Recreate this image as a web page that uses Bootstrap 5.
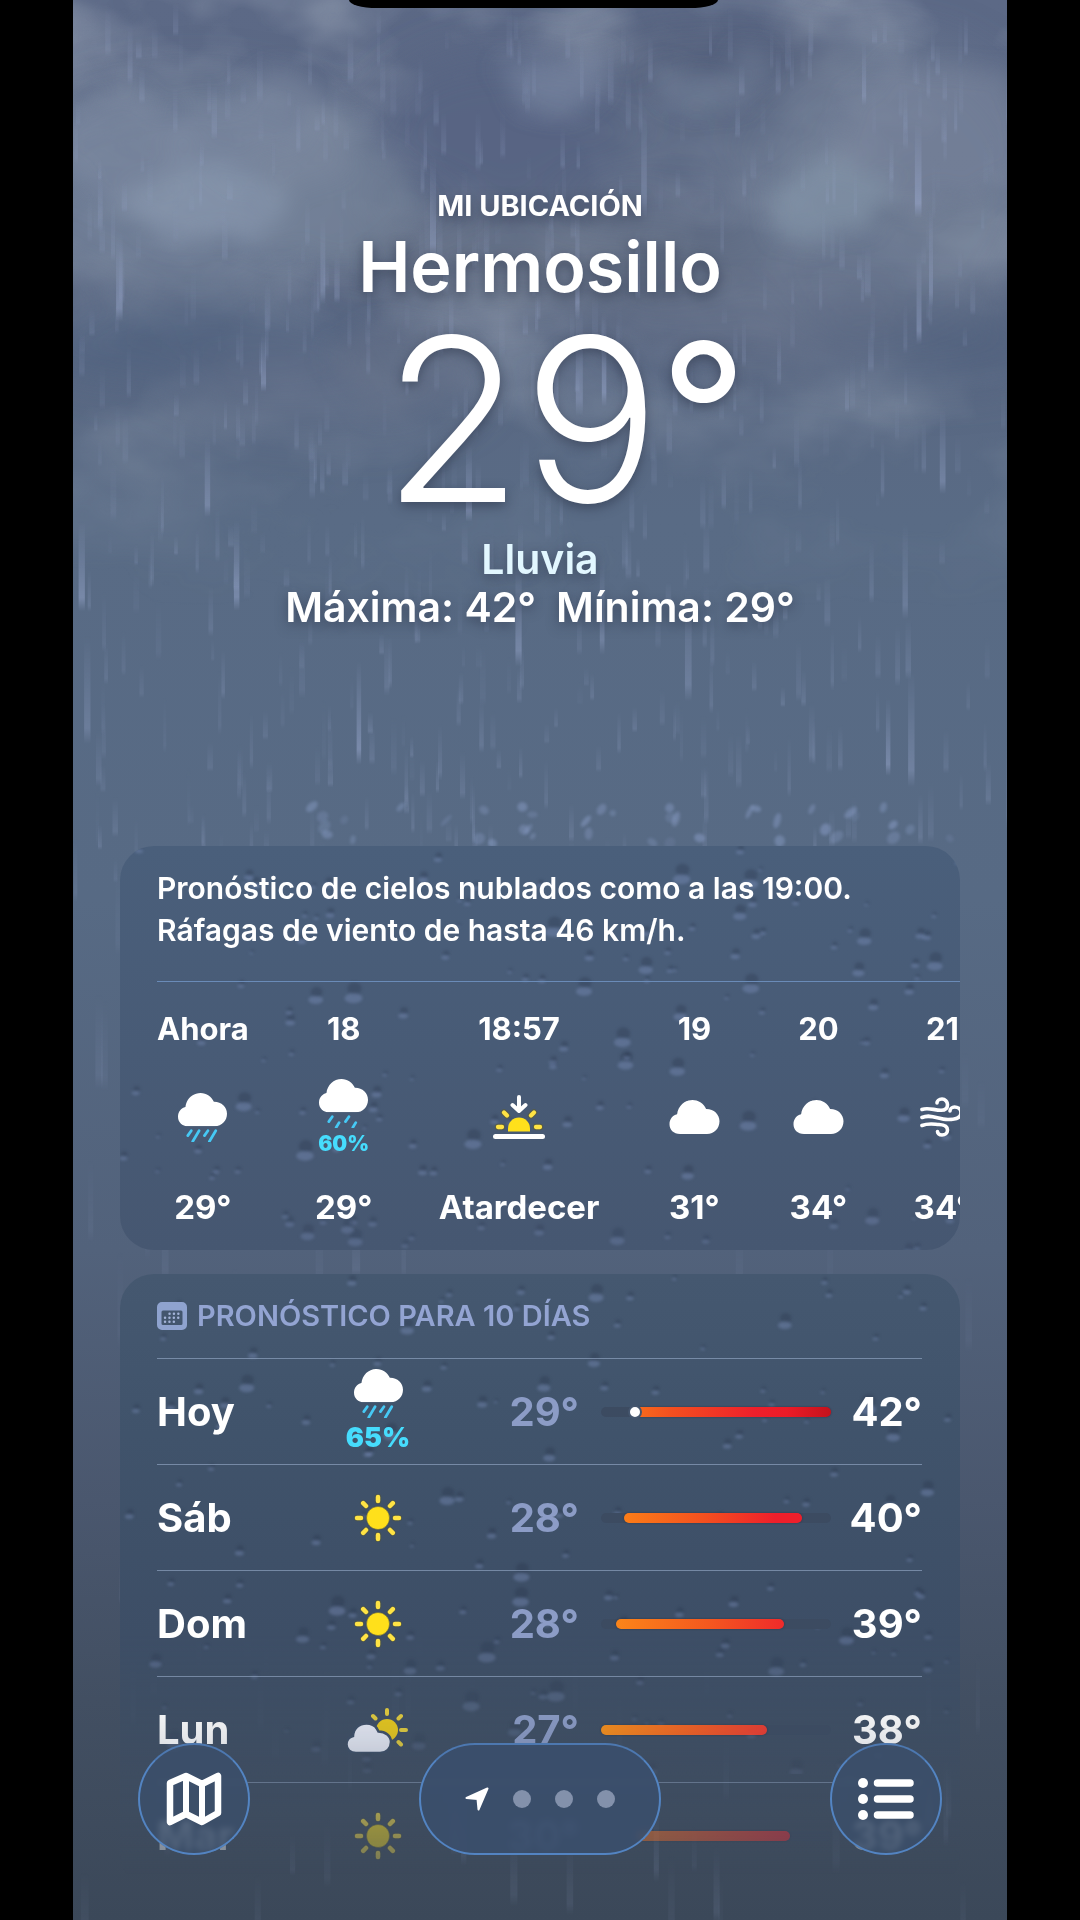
<!DOCTYPE html>
<html lang="es">
<head>
<meta charset="utf-8">
<meta name="viewport" content="width=device-width, initial-scale=1">
<title>Tiempo – Hermosillo</title>
<link href="https://cdn.jsdelivr.net/npm/bootstrap@5.3.0/dist/css/bootstrap.min.css" rel="stylesheet">
<style>
  body { background: #000; color: #fff; font-family: Inter, "Noto Sans", sans-serif; }
  .phone { max-width: 934px; min-height: 100vh; isolation: isolate;
    background: linear-gradient(#5c6986 0, #5a6782 300px, #596b85 520px, #576a84 900px, #52627b 1250px, #4a576e 1500px, #424f62 1700px, #3b4859 1920px); }
  .sky { z-index: -1; }
  .sky svg { height: 640px; }
  .notch { left: 276px; width: 369px; height: 8px; border-radius: 0 0 28px 28px / 0 0 8px 8px; }

  .hero { padding: 189px 0 0; text-shadow: 0 4px 12px rgba(40, 50, 70, .55); }
  .place-tag { font-size: 29px; line-height: 34px; font-weight: 700; }
  .city { font-size: 70px; line-height: 88px; font-weight: 600; }
  .now-temp { font-size: 228px; line-height: 216px; font-weight: 300; padding-left: 50px; }
  .now-degree { font-size: 192px; line-height: 200px; font-weight: 400; }
  .condition { font-size: 41px; line-height: 48px; font-weight: 600; gap: 20px; }
  .sky-word { color: #e2f7ff; }

  .panel { border-radius: 34px; margin: 0 47px; isolation: isolate; }
  .panel > canvas { z-index: -1; }
  .panel-hours { margin-top: 215px; background: linear-gradient(#4a5f7b, #465771); }
  .panel-days { margin-top: 24px; background: linear-gradient(#455870 0, #40536b 160px, #3d4e66 360px, rgba(61, 77, 98, .8) 470px, rgba(60, 73, 90, 0) 600px); }
  .summary { font-size: 30px; line-height: 42px; font-weight: 600; padding: 21px 37px 30px 0; border-bottom: 1px solid #6a8bb8; }
  .panel-hours .inset { padding: 0 0 23px 37px; }
  .hours { gap: 66px; padding-top: 29px; }
  .hours li { min-width: 58px; }
  .hour-label { font-size: 31px; line-height: 36px; font-weight: 700; }
  .hour-icon { height: 140px; }
  .hour-temp { font-size: 33px; line-height: 40px; font-weight: 700; }
  .chance { color: #46dcfd; font-size: 21px; line-height: 24px; font-weight: 900; }

  .panel-days .inset { padding: 0 38px 0 37px; }
  .panel-title { font-size: 29px; line-height: 32px; font-weight: 600; color: #93a4d2; padding: 26px 0; gap: 10px; }
  .days { -webkit-mask-image: linear-gradient(#000 330px, rgba(0,0,0,.85) 385px, rgba(0,0,0,.45) 470px, rgba(0,0,0,.35) 500px, transparent 530px);
    mask-image: linear-gradient(#000 330px, rgba(0,0,0,.85) 385px, rgba(0,0,0,.45) 470px, rgba(0,0,0,.35) 500px, transparent 530px); }
  .day-row { height: 106px; border-top: 1px solid rgba(155, 175, 205, .6); font-size: 40px; line-height: 48px; font-weight: 700; }
  .day-name { width: 170px; }
  .day-icon { width: 102px; }
  .day-icon .chance { font-size: 27px; line-height: 32px; }
  .low { width: 150px; color: #8c9cc6; }
  .high { width: 91px; }
  .track { height: 10px; margin-left: 22px; border-radius: 5px; background: #3c4b61; }
  .heat { height: 10px; border-radius: 5px; box-shadow: 0 0 2px rgba(30, 35, 50, .6); }
  .now-dot { width: 14px; height: 14px; margin-left: -2px; border: 2px solid #45566e; }
  svg { display: block; flex: none; }

  .dock { padding: 0 65px 65px; max-width: 934px; margin: 0 auto; }
  .glass { height: 112px; color: #fff; border: 2px solid #5384c2; border-top-color: #4d78b0; background: rgba(58, 79, 108, .88);
    -webkit-backdrop-filter: blur(3px); backdrop-filter: blur(3px); }
  .glass-round { width: 112px; background: rgba(58, 79, 108, .72); }
  .pages { width: 242px; padding: 0 44px; }
  .page-dot { width: 18px; height: 18px; background: #8391ab; }
</style>
<script src="https://cdn.jsdelivr.net/npm/bootstrap@5.3.0/dist/js/bootstrap.bundle.min.js"></script>
</head>
<body>

<svg width="0" height="0" class="position-absolute" aria-hidden="true">
  <defs>
    <symbol id="cloud" viewBox="0 0 50 34"><path fill="#fff" d="M10.500 34C4 34 0 29.500 0 24.200c0-5 3-8.700 7.600-9.900C8.500 6 15 0 23 0c6.300 0 11.200 3.600 13.600 9C44.200 8.800 50 14.300 50 21.300 50 28.500 44.700 34 37.500 34Z"/></symbol>
    <symbol id="rain" viewBox="0 0 50 50"><use href="#cloud" width="50" height="34"/>
      <path stroke="#46c9f5" stroke-width="2.800" stroke-linecap="round" d="M13.500 38.500l-3.500 5M21.500 38.500l-6.500 11M30.500 38.500l-3.500 5M38.500 38.500l-6.500 11"/></symbol>
    <symbol id="drizzle" viewBox="0 0 50 50"><use href="#cloud" width="50" height="34"/>
      <path stroke="#46c9f5" stroke-width="2.800" stroke-linecap="round" d="M13.500 38.500l-3.500 5M20.500 44.500l-3 5M30.500 38.500l-3.500 5M37.500 44.500l-3 5"/></symbol>
    <symbol id="sun" viewBox="0 0 48 48"><circle cx="24" cy="24" r="11.500" fill="#ffe01b" stroke="#5a5a3c" stroke-opacity=".5"/>
      <path stroke="#54563e" stroke-opacity=".6" stroke-width="6.500" stroke-linecap="round" d="M24 3v4M24 41v4M3 24h4M41 24h4M9.200 9.200l2.800 2.800M36 36l2.800 2.800M9.200 38.800l2.800-2.800M36 12l2.800-2.800"/>
      <path stroke="#ffe344" stroke-width="4.500" stroke-linecap="round" d="M24 3v4M24 41v4M3 24h4M41 24h4M9.200 9.200l2.800 2.800M36 36l2.800 2.800M9.200 38.800l2.800-2.800M36 12l2.800-2.800"/></symbol>
    <symbol id="sunset" viewBox="0 0 52 46">
      <path fill="none" stroke="#fff" stroke-width="4" stroke-linecap="round" stroke-linejoin="round" d="M26 3v13M19.500 11l6.500 6 6.500-6"/>
      <path fill="#ffe01b" d="M15 37.500v-3a11 11 0 0 1 22 0v3Z"/>
      <path stroke="#5c5c36" stroke-opacity=".7" stroke-width="6.500" stroke-linecap="round" d="M5 33h4M43 33h4M11 18.500l3 3M41 18.500l-3 3"/>
      <path stroke="#ffe344" stroke-width="4.300" stroke-linecap="round" d="M5 33h4M43 33h4M11 18.500l3 3M41 18.500l-3 3"/>
      <path stroke="#fff" stroke-width="5" stroke-linecap="round" d="M2.500 42.500h47"/></symbol>
    <symbol id="wind" viewBox="0 0 44 40"><path fill="none" stroke="#fff" stroke-width="3.600" stroke-linecap="round" d="M2 12.500c6-2.500 12 .8 19 .8 4.500 0 6.500-2.500 6.500-5.600S25 2 22 2s-5 2-5 4M2 20.500c9-4 16 2 26 2 8 0 13-2 13-6.500s-4-6-6.500-6-4.500 2-4.500 4M2 28.500c6-2.500 10-1.500 17-1 6 .3 8.500 2.500 8.500 5.500s-2.500 5-5.500 5-4.500-2-4.500-3.500"/></symbol>
    <symbol id="cloudsun" viewBox="0 0 62 44">
      <circle cx="40" cy="22" r="11" fill="#e9c91b"/>
      <path stroke="#e3cc3c" stroke-width="4" stroke-linecap="round" d="M40 2v4M54 22h5M26 8l2.500 2.500M54 8l-2.500 2.500M51.500 34l2.500 2.500"/>
      <path fill="#e8ebf6" stroke="#3d4e66" stroke-width="2.500" d="M9 45C3.500 45-.5 41.500-.5 36.500c0-4.500 2.500-7.500 6.500-8.500C6.500 20 12 15.500 19.500 15.500c5.500 0 10 3 12 8 7 0 12.500 4.500 12.500 10.500C44 40 39.500 45 33 45Z"/></symbol>
  </defs>
</svg>

<div class="phone position-relative mx-auto overflow-hidden">
  <div class="sky position-absolute top-0 start-0 w-100 h-100" aria-hidden="true">
    <svg class="w-100" viewBox="0 0 934 640" preserveAspectRatio="none">
      <defs>
        <filter id="soft" x="-40%" y="-40%" width="180%" height="180%"><feGaussianBlur stdDeviation="24"/></filter>
        <filter id="puff" x="-20%" y="-20%" width="140%" height="140%">
          <feTurbulence type="fractalNoise" baseFrequency=".012 .016" numOctaves="4" seed="8" result="n"/>
          <feDisplacementMap in="SourceGraphic" in2="n" scale="80" xChannelSelector="R" yChannelSelector="G"/><feGaussianBlur stdDeviation="11"/></filter>
        <filter id="haze" x="0" y="0" width="100%" height="100%">
          <feTurbulence type="fractalNoise" baseFrequency=".006 .009" numOctaves="4" seed="21"/>
          <feColorMatrix values="0 0 0 0 .5  0 0 0 0 .56  0 0 0 0 .64  1.600 0 0 0 -.62"/></filter>
        <linearGradient id="fade" x2="0" y2="1"><stop offset=".4" stop-color="#fff"/><stop offset=".95"/></linearGradient>
        <mask id="fademask"><rect width="934" height="640" fill="url(#fade)"/></mask>
      </defs>
      <g mask="url(#fademask)">
        <rect width="934" height="640" filter="url(#haze)" opacity=".6"/>
        <g filter="url(#soft)">
          <ellipse cx="120" cy="190" rx="190" ry="110" fill="#75839b" opacity=".6"/>
          <ellipse cx="820" cy="190" rx="150" ry="150" fill="#738196" opacity=".6"/>
          <ellipse cx="430" cy="130" rx="130" ry="80" fill="#556483" opacity=".75"/>
          <ellipse cx="640" cy="60" rx="120" ry="36" fill="#505b76" opacity=".6"/>
          <ellipse cx="620" cy="140" rx="90" ry="60" fill="#57647f" opacity=".6"/>
          <ellipse cx="130" cy="345" rx="180" ry="40" fill="#4e607e" opacity=".8"/>
          <ellipse cx="860" cy="345" rx="130" ry="40" fill="#4f607d" opacity=".8"/>
          <ellipse cx="480" cy="260" rx="220" ry="50" fill="#647085" opacity=".7"/>
          <ellipse cx="260" cy="390" rx="150" ry="46" fill="#637089" opacity=".55"/>
          <ellipse cx="680" cy="320" rx="160" ry="50" fill="#667289" opacity=".6"/>
        </g>
        <g filter="url(#puff)">
          <ellipse cx="190" cy="140" rx="90" ry="50" fill="#8490a8" opacity=".4"/>
          <ellipse cx="260" cy="190" rx="85" ry="75" fill="#7d899e" opacity=".45"/>
          <ellipse cx="130" cy="205" rx="75" ry="34" fill="#93a4ba" opacity=".5"/>
          <ellipse cx="50" cy="150" rx="70" ry="50" fill="#8490a8" opacity=".4"/>
          <ellipse cx="470" cy="85" rx="60" ry="26" fill="#8290aa" opacity=".5"/>
          <ellipse cx="640" cy="80" rx="55" ry="22" fill="#7d89a1" opacity=".45"/>
          <ellipse cx="860" cy="130" rx="90" ry="75" fill="#8089a2" opacity=".4"/>
          <ellipse cx="760" cy="205" rx="60" ry="36" fill="#8fa1b4" opacity=".5"/>
          <ellipse cx="330" cy="370" rx="60" ry="40" fill="#6f788d" opacity=".4"/>
        </g>
      </g>
    </svg>
    <canvas id="downpour" class="position-absolute top-0 start-0" width="934" height="1920"></canvas>
  </div>
  <div class="notch position-absolute top-0 bg-black"></div>

  <header class="hero text-center">
    <div class="place-tag">MI UBICACIÓN</div>
    <h1 class="city mb-0">Hermosillo</h1>
    <div class="now-temp d-flex justify-content-center"><span>29</span><span class="now-degree">°</span></div>
    <div class="condition sky-word mt-2">Lluvia</div>
    <div class="condition d-flex justify-content-center"><span>Máxima: 42°</span><span>Mínima: 29°</span></div>
  </header>

  <main>
    <section class="panel panel-hours position-relative overflow-hidden" aria-label="Pronóstico por hora">
      <canvas class="beads position-absolute top-0 start-0" width="840" height="405"></canvas>
      <div class="inset position-relative">
        <p class="summary mb-0">Pronóstico de cielos nublados como a las 19:00.<br>Ráfagas de viento de hasta 46 km/h.</p>
        <ul class="hours d-flex list-unstyled mb-0 text-center text-nowrap">
          <li class="flex-shrink-0"><div class="hour-label">Ahora</div><div class="hour-icon d-flex flex-column align-items-center justify-content-center"><svg width="49" height="49"><use href="#rain"/></svg></div><div class="hour-temp">29°</div></li>
          <li class="flex-shrink-0"><div class="hour-label">18</div><div class="hour-icon d-flex flex-column align-items-center justify-content-center"><svg class="mb-1" width="49" height="49"><use href="#drizzle"/></svg><div class="chance">60%</div></div><div class="hour-temp">29°</div></li>
          <li class="flex-shrink-0"><div class="hour-label">18:57</div><div class="hour-icon d-flex flex-column align-items-center justify-content-center"><svg width="52" height="46"><use href="#sunset"/></svg></div><div class="hour-temp">Atardecer</div></li>
          <li class="flex-shrink-0"><div class="hour-label">19</div><div class="hour-icon d-flex flex-column align-items-center justify-content-center"><svg width="51" height="34"><use href="#cloud"/></svg></div><div class="hour-temp">31°</div></li>
          <li class="flex-shrink-0"><div class="hour-label">20</div><div class="hour-icon d-flex flex-column align-items-center justify-content-center"><svg width="51" height="34"><use href="#cloud"/></svg></div><div class="hour-temp">34°</div></li>
          <li class="flex-shrink-0"><div class="hour-label">21</div><div class="hour-icon d-flex flex-column align-items-center justify-content-center"><svg width="44" height="40"><use href="#wind"/></svg></div><div class="hour-temp">34°</div></li>
        </ul>
      </div>
    </section>

    <section class="panel panel-days position-relative" aria-label="Pronóstico para 10 días">
      <canvas class="beads position-absolute top-0 start-0" width="840" height="500"></canvas>
      <div class="inset position-relative">
        <h2 class="panel-title d-flex align-items-center mb-0">
          <svg width="30" height="28" viewBox="0 0 30 28"><path fill="#8fa3cf" fill-rule="evenodd" d="M5 0h20a5 5 0 0 1 5 5v18a5 5 0 0 1-5 5H5a5 5 0 0 1-5-5V5a5 5 0 0 1 5-5ZM6 8.500A1.500 1.500 0 0 0 4.500 10v11.500A1.500 1.500 0 0 0 6 23h18a1.500 1.500 0 0 0 1.500-1.500V10A1.500 1.500 0 0 0 24 8.500Z"/>
            <path stroke="#a3b3d8" stroke-width="2.400" stroke-linecap="round" stroke-dasharray=".1 4.300" d="M12.500 11.700h10M8 15.700h15M8 19.700h10"/></svg>
          PRONÓSTICO PARA 10 DÍAS
        </h2>
        <ul class="days list-unstyled mb-0">
          <li class="day-row d-flex align-items-center">
            <span class="day-name">Hoy</span>
            <span class="day-icon d-flex flex-column align-items-center"><svg class="mb-1" width="49" height="49"><use href="#rain"/></svg><span class="chance">65%</span></span>
            <span class="low text-end">29°</span>
            <span class="track flex-grow-1"><span class="heat position-relative d-block" style="margin-left:12.500%;width:87.500%;background:linear-gradient(90deg,#f8701c,#f4501f 20%,#ee1f2b 62%,#ec1b27 78%,#c4121c)"><span class="now-dot position-absolute top-50 start-0 translate-middle-y bg-white rounded-circle"></span></span></span>
            <span class="high text-end">42°</span>
          </li>
          <li class="day-row d-flex align-items-center">
            <span class="day-name">Sáb</span>
            <span class="day-icon d-flex justify-content-center"><svg width="48" height="48"><use href="#sun"/></svg></span>
            <span class="low text-end">28°</span>
            <span class="track flex-grow-1"><span class="heat d-block" style="margin-left:10%;width:77.500%;background:linear-gradient(90deg,#fb7d18,#f4501f 45%,#ee1f2b 85%)"></span></span>
            <span class="high text-end">40°</span>
          </li>
          <li class="day-row d-flex align-items-center">
            <span class="day-name">Dom</span>
            <span class="day-icon d-flex justify-content-center"><svg width="48" height="48"><use href="#sun"/></svg></span>
            <span class="low text-end">28°</span>
            <span class="track flex-grow-1"><span class="heat d-block" style="margin-left:6.500%;width:73%;background:linear-gradient(90deg,#fb8519,#f4581f 55%,#ef2a2b)"></span></span>
            <span class="high text-end">39°</span>
          </li>
          <li class="day-row d-flex align-items-center">
            <span class="day-name">Lun</span>
            <span class="day-icon d-flex justify-content-center"><svg width="62" height="46"><use href="#cloudsun"/></svg></span>
            <span class="low text-end">27°</span>
            <span class="track flex-grow-1"><span class="heat d-block" style="margin-left:0%;width:72%;background:linear-gradient(90deg,#fb9118,#f8641f 50%,#ee3a2f)"></span></span>
            <span class="high text-end">38°</span>
          </li>
          <li class="day-row d-flex align-items-center">
            <span class="day-name">Mar</span>
            <span class="day-icon d-flex justify-content-center"><svg width="48" height="48"><use href="#sun"/></svg></span>
            <span class="low text-end">30°</span>
            <span class="track flex-grow-1"><span class="heat d-block" style="margin-left:15%;width:67%;background:linear-gradient(90deg,#f8781f,#ee2a33)"></span></span>
            <span class="high text-end">39°</span>
          </li>
        </ul>
      </div>
    </section>
  </main>
</div>

<nav class="dock fixed-bottom d-flex justify-content-between align-items-center" aria-label="Ubicaciones">
  <button class="glass glass-round rounded-circle d-flex align-items-center justify-content-center p-0" type="button" aria-label="Mapa">
    <svg width="56" height="54" viewBox="0 0 56 54"><path fill="none" stroke="#fff" stroke-width="6.500" stroke-linejoin="round" d="M4 11 20 4l16 8 16-8v37l-16 9-16-8L4 50Z"/><path stroke="#fff" stroke-width="6" d="M20 4v38M36 12v38"/></svg>
  </button>
  <div class="glass pages rounded-pill d-flex align-items-center justify-content-between">
    <button class="btn p-0 border-0" type="button" aria-label="Mi ubicación"><svg width="24" height="24" viewBox="0 0 24 24"><path fill="#fff" stroke="#fff" stroke-width="2" stroke-linejoin="round" d="M22.500 1.500 13.500 22.500 12.500 12 1.500 11Z"/></svg></button>
    <button class="page-dot border-0 p-0 rounded-circle" type="button" aria-label="Ubicación 2"></button>
    <button class="page-dot border-0 p-0 rounded-circle" type="button" aria-label="Ubicación 3"></button>
    <button class="page-dot border-0 p-0 rounded-circle" type="button" aria-label="Ubicación 4"></button>
  </div>
  <button class="glass glass-round rounded-circle d-flex align-items-center justify-content-center p-0" type="button" aria-label="Lista">
    <svg width="56" height="42" viewBox="0 0 56 42"><g fill="#fff"><circle cx="5" cy="5" r="5"/><circle cx="5" cy="21" r="5"/><circle cx="5" cy="37" r="5"/></g><path stroke="#fff" stroke-width="7.500" stroke-linecap="round" d="M19.500 5h32.500M19.500 21h32.500M19.500 37h32.500"/></svg>
  </button>
</nav>

<script>
  // Seeded generator, so that the weather looks the same on each load
  function seeded(s) { return function () { s = (s * 1664525 + 1013904223) % 4294967296; return s / 4294967296; }; }

  function rain() {
    const c = document.getElementById('downpour'), g = c.getContext('2d'), r = seeded(7);
    g.filter = 'blur(0.7px)';
    function streak(x, y, len, w, a) {
      const f = g.createLinearGradient(0, y, 0, y + len);
      f.addColorStop(0, 'rgba(155,170,208,0)');
      f.addColorStop(.85, 'rgba(155,170,208,' + a + ')');
      f.addColorStop(1, 'rgba(155,170,208,0)');
      g.fillStyle = f; g.fillRect(x, y, w, len);
    }
    for (let i = 0; i < 560; i++) { const y = r() * 860; streak(r() * 934, y, 20 + r() * 45, 3 + r() * 3, .05 + r() * .17); }
    for (let i = 0; i < 28; i++) { streak(r() * 934, 30 + r() * 740, 60 + r() * 60, 4 + r() * 3, .28 + r() * .22); }
    for (let i = 0; i < 120; i++) { streak(r() * 934, 850 + r() * 1050, 40 + r() * 60, 4 + r() * 4, .04 + r() * .1); }
    // Splashes along the top edge of the first panel
    g.filter = 'blur(1.5px)';
    for (let i = 0; i < 40; i++) {
      g.fillStyle = 'rgba(150,170,215,' + (.12 + r() * .3) + ')';
      g.beginPath(); g.ellipse(200 + r() * 690, 806 + r() * 38, 2 + r() * 4, 3 + r() * 5, r(), 0, 7); g.fill();
    }
  }

  function beads(c, seed) {
    const g = c.getContext('2d'), r = seeded(seed);
    for (let i = 0; i < 150; i++) {
      const x = r() * c.width, y = r() * c.height, big = r() > .84, s = big ? 6 + r() * 3 : 2 + r() * 3;
      const a = 1 - Math.max(0, y - 330) / 240;
      g.filter = 'blur(1.5px)';
      g.fillStyle = 'rgba(35,48,70,' + .28 * a + ')';
      g.beginPath(); g.ellipse(x + 1, y - s * .5, s * .8, s * .7, 0, 0, 7); g.fill();
      g.fillStyle = 'rgba(125,145,190,' + .4 * a + ')';
      g.beginPath(); g.ellipse(x, y + s * .6, s, s * .55, 0, 0, 7); g.fill();
    }
  }
  rain();
  document.querySelectorAll('.beads').forEach((c, i) => beads(c, 31 + i * 12));
</script>
</body>
</html>
